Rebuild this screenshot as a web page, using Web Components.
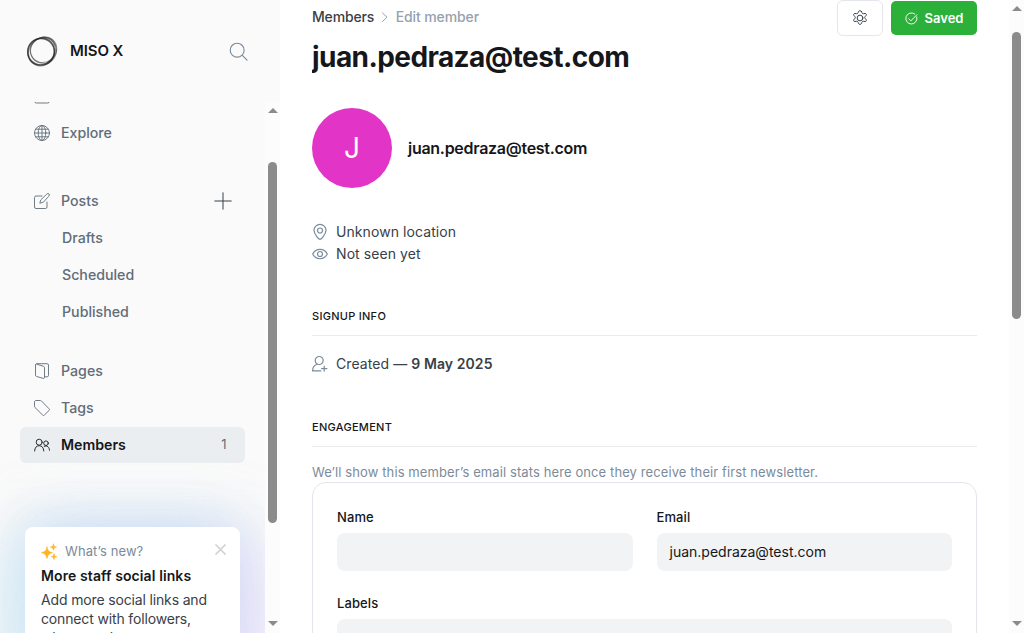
<!DOCTYPE html>
<html lang="en">
<head>
<meta charset="utf-8">
<title>Edit member</title>
<style>
html,body{margin:0;height:100%;overflow:hidden;background:#fff}
body{font-family:Inter,"Open Sans",sans-serif;font-size:14px;color:#15171a}
</style>
</head>
<body>
<admin-app></admin-app>
<script>
const define = (name, html, setup) => {
  const template = document.createElement('template');
  template.innerHTML = html;
  customElements.define(name, class extends HTMLElement {
    constructor() {
      super();
      this.attachShadow({ mode: 'open' }).append(template.content.cloneNode(true));
    }
    connectedCallback() { if (setup) setup(this, this.shadowRoot); }
  });
};

const icons = {
  ring: ['0 0 32 32', '<g fill="none" stroke="#222"><circle cx="15" cy="16.700" r="13.300" stroke-width="1.500" opacity=".7"/><ellipse cx="17.600" cy="14.800" rx="13.600" ry="12.200" stroke-width="1" opacity=".45" transform="rotate(-35 17.600 14.800)"/><ellipse cx="15.800" cy="16" rx="14.800" ry="12.300" stroke-width="1.200" opacity=".45" transform="rotate(-50 16 16)"/><ellipse cx="15.500" cy="16.800" rx="13.100" ry="14.200" stroke-width="1" opacity=".5" transform="rotate(25 15 16)"/><circle cx="17.400" cy="15.300" r="13" stroke-width="1.200" opacity=".35"/><path d="M17 2.300c6 0 10.500 2.500 12 8" stroke-width="2.800" opacity=".2"/><path d="M30 15c-.5 6-3 10-7 12.500" stroke-width="2.500" opacity=".2"/></g>'],
  search: ['0 0 20 20', '<circle cx="8.6" cy="8.6" r="7.3"/><path d="M14 14l5 5"/>'],
  site: ['0 0 16 16', '<rect x=".5" y="1" width="15" height="14" rx="2"/>'],
  globe: ['0 0 16 16', '<circle cx="8" cy="8" r="7.5"/><ellipse cx="8" cy="8" rx="3.8" ry="7.5"/><path d="M8 .5v15M.5 8h15M1.7 4.2h12.6M1.7 11.8h12.6"/>'],
  edit: ['0 0 16 16', '<path d="M8 3H2A1.5 1.5 0 0 0 .5 4.500v9.500A1.500 1.500 0 0 0 2 15.500h9.500A1.500 1.500 0 0 0 13 14V9"/><path d="M9 9.300l-3.200.9.900-3.200 6.200-6a1.400 1.400 0 0 1 2.100 2z"/>'],
  plus: ['0 0 18 18', '<path d="M9 .8v16.400M.8 9h16.400"/>'],
  pages: ['0 0 16 16', '<path d="M1.500 2v10.200c0 .6.3 1 .9 1.200l6.800 2c.7.200 1.300-.2 1.300-.9V4.700c0-.7-.3-1.200-1-1.400L2.700 1.100"/><path d="M1.500 2C1.500 1.200 2 .700 2.800.700h10.400c.8 0 1.300.5 1.300 1.300v10.500c0 .8-.5 1.300-1.300 1.300h-2.500"/>'],
  tag: ['0 0 16 16', '<path d="M.5 1.700C.5 1 1 .5 1.700.5h4.600c.4 0 .8.100 1.100.4l7.700 7.900c.5.500.5 1.100 0 1.600L10.300 15.100c-.5.500-1.100.5-1.600 0L.9 7.400A1.500 1.500 0 0 1 .5 6.300z"/>'],
  members: ['0 0 16 16', '<circle cx="5.200" cy="5.200" r="3"/><path d="M.6 14c.2-3.400 1.900-5.300 4.600-5.300S9.600 10.600 9.800 14"/><circle cx="12" cy="6.200" r="2.300"/><path d="M10.300 9.300c3-1.200 5 .8 5.200 4"/>'],
  spark: ['0 0 16 16', '<path fill="#ffb41f" stroke="#ffb41f" stroke-width=".7" d="M6 3.200c.8 3.500 1.800 4.700 5.500 5.500-3.700.8-4.700 2-5.500 5.700-.8-3.700-1.800-4.900-5.500-5.700C4.200 7.900 5.200 6.700 6 3.200zM12.400.2c.4 1.900.9 2.500 3 2.900-2.100.4-2.600 1-3 3-.4-2-.9-2.600-3-3 2.100-.4 2.600-1 3-2.900zM13 10c.4 1.900.8 2.400 2.700 2.800-1.900.4-2.300.9-2.700 2.800-.4-1.900-.8-2.400-2.700-2.800 1.900-.4 2.300-.9 2.700-2.800z"/>'],
  close: ['0 0 12 12', '<path d="M1 1l10 10M11 1L1 11"/>'],
  chevron: ['0 0 8 12', '<path d="M1.500 2l4.500 4.200L1.500 10.500"/>'],
  gear: ['0 0 24 24', '<circle cx="12" cy="12" r="4.300"/><path d="M14.200 2.200l.7 1.900a2.300 2.300 0 0 0 2.600 1.500l2-.4c1.700-.2 2.700 1.700 1.600 3l-1.300 1.500a2.300 2.300 0 0 0 0 3l1.300 1.600c1.100 1.300.1 3.200-1.600 3l-2-.4a2.300 2.300 0 0 0-2.600 1.500l-.7 1.900c-.6 1.600-3.800 1.600-4.400 0l-.7-1.900a2.300 2.300 0 0 0-2.600-1.500l-2 .4c-1.700.2-2.700-1.700-1.600-3l1.300-1.600a2.300 2.300 0 0 0 0-3L2.900 8.200c-1.100-1.300-.1-3.200 1.600-3l2 .4a2.300 2.300 0 0 0 2.600-1.500l.7-1.900c.6-1.600 3.800-1.600 4.400 0z"/>'],
  check: ['0 0 14 14', '<path d="M12.700 5.300A6 6 0 1 1 10.500 2.100"/><path d="M4 7.300l2.300 2.300L12.700 3"/>'],
  pin: ['0 0 16 16', '<path d="M8 15.300c-1 0-6-5.100-6-9a6 6 0 0 1 12 0c0 3.900-5 9-6 9z"/><circle cx="8" cy="6.500" r="2.500"/>'],
  eye: ['0 0 16 16', '<path d="M.7 8C3.800 1.700 12.200 1.700 15.300 8c-3.100 6.300-11.500 6.300-14.600 0z"/><circle cx="8" cy="8" r="2.500"/>'],
  signup: ['0 0 16 16', '<circle cx="7.200" cy="4.500" r="4"/><path d="M4.700 8.300C2 9.500.6 11.600.6 14.900h8.200M12.200 10v5.200M9.600 12.600h5.300"/>']
};
define('ui-icon', `<style>:host{display:block;flex:none;width:16px;height:16px;color:inherit}svg{display:block;width:100%;height:100%;fill:none;stroke:currentColor;stroke-linecap:round;stroke-linejoin:round;overflow:visible}</style><svg></svg>`, (el, root) => {
  const [box, body] = icons[el.getAttribute('name')];
  const svg = root.querySelector('svg');
  svg.setAttribute('viewBox', box);
  svg.innerHTML = body;
});

const makeIcon = name => {
  const icon = document.createElement('ui-icon');
  icon.setAttribute('name', name);
  return icon;
};

define('nav-item', `<style>
:host{display:flex;align-items:center;box-sizing:border-box;height:36px;margin-bottom:1px;padding:0 14px;border-radius:6px;color:#626d79;font-size:14.2px;font-weight:500;line-height:20px}
:host([sub]) .label{margin-left:28px}
:host([active]){background:#ebeef0;color:#15171a;font-weight:600}
ui-icon{stroke-width:.9}
.label{margin-left:11px;flex:1}
</style><span class="label"><slot></slot></span><slot name="end"></slot>`, (el, root) => {
  if (el.hasAttribute('icon')) root.querySelector('.label').before(makeIcon(el.getAttribute('icon')));
});

define('scroll-bar', `<style>
:host{display:flex;flex-direction:column;align-items:center;box-sizing:border-box;width:15px;height:100%;background:#fcfcfc;padding:6px 0 7px}
i{width:0;height:0;border:5px solid transparent}
.up{border-top:0;border-bottom:5px solid #8b8b8b}
.down{border-bottom:0;border-top:5px solid #8b8b8b;margin-top:auto}
b{width:9px;height:var(--thumb);margin-top:var(--offset);background:#8b8b8b;border-radius:4.500px}
</style><i class="up"></i><b></b><i class="down"></i>`);

define('whats-new', `<style>
:host{display:block;box-sizing:border-box;width:215px;height:150px;margin:64px 0 0 5px;padding:16px;background:#fff;border-radius:8px;
box-shadow:-28px 18px 56px rgba(205,238,246,.5),26px 20px 56px rgba(230,212,252,.55),0 -4px 56px rgba(160,200,238,.6)}
header{display:flex;align-items:center;height:16px;font-size:13px;line-height:17px;color:#7c8b9a;letter-spacing:.1px}
header ui-icon{margin-right:8.500px;margin-top:1px;margin-left:-.5px}
header .x{width:11px;height:11px;margin:-4px -1.500px 0 auto;color:#d3d3d3;stroke-width:1.700}
h3{margin:7px 0 4px;font-size:14px;line-height:20px;font-weight:600;letter-spacing:.1px}
p{margin:0;font-size:14px;line-height:19px;color:#394047;letter-spacing:-.15px}
</style><header><ui-icon name="spark"></ui-icon><span>What’s new?</span><ui-icon class="x" name="close"></ui-icon></header><h3>More staff social links</h3><p>Add more social links and connect with followers, wherever they</p>`);

define('app-sidebar', `<style>
:host{display:flex;flex-direction:column;width:280px;height:100%;background:#fafafa;flex:none}
.brand{display:flex;align-items:center;height:102px;padding:0 32px 0 26px;box-sizing:border-box;flex:none}
.brand .logo{width:32px;height:32px}
.brand b{margin:-2px 0 0 12px;flex:1;font-size:15px;font-weight:600;letter-spacing:-.1px}
.brand .search{width:19px;height:19px;margin-right:.5px;color:#7c8b9a;stroke-width:1.200}
.body{display:flex;flex:1;min-height:0}
nav{flex:1;overflow:hidden;padding:0 20px;box-sizing:border-box}
.list{margin-top:-24px}
.gap{margin-bottom:32px}.gap2{margin-bottom:23px}
.plus{width:18px;height:18px;margin-right:-1px;color:#394047;stroke-width:1}
.count{font-size:13px;font-weight:400;color:#626d79;margin:-3px 4.500px 0 0}
scroll-bar{--offset:49px;--thumb:361px}
</style>
<div class="brand"><ui-icon class="logo" name="ring"></ui-icon><b>MISO X</b><ui-icon class="search" name="search"></ui-icon></div>
<div class="body"><nav><div class="list">
<nav-item icon="site"></nav-item>
<nav-item icon="globe" class="gap">Explore</nav-item>
<nav-item icon="edit">Posts<ui-icon slot="end" class="plus" name="plus"></ui-icon></nav-item>
<nav-item sub>Drafts</nav-item><nav-item sub>Scheduled</nav-item><nav-item sub class="gap2">Published</nav-item>
<nav-item icon="pages">Pages</nav-item><nav-item icon="tag">Tags</nav-item>
<nav-item icon="members" active>Members<span slot="end" class="count">1</span></nav-item>
</div><whats-new></whats-new></nav><scroll-bar></scroll-bar></div>`);

define('action-bar', `<style>
:host{display:flex;gap:8px;height:36px}
button{font:600 13px/20px Inter,sans-serif;display:flex;align-items:center;justify-content:center;box-sizing:border-box;margin:0;padding:0}
.gear{width:46px;height:36px;border:1px solid #e3e6ea;border-radius:6px;background:#fff;color:#394047}
.gear ui-icon{stroke-width:1.500;width:16px;height:16px}
.saved{width:86px;height:34px;margin-top:1px;border:0;border-radius:5px;background:#2bb13a;color:#fff;gap:7px}
.saved ui-icon{width:13px;height:13px}
</style><button class="gear" aria-label="Settings"><ui-icon name="gear"></ui-icon></button><button class="saved"><ui-icon name="check"></ui-icon><span>Saved</span></button>`);

define('page-header', `<style>
:host{display:flex;justify-content:space-between;height:76px}
.crumbs{display:flex;align-items:center;height:20px;margin-top:6px;font-size:14px;font-weight:500;color:#394047;letter-spacing:-.16px}
.crumbs ui-icon{width:8px;height:12px;margin:2px 6.500px 0 7px;color:#95a1ad}
.crumbs em{font-style:normal;color:#95a1ad;letter-spacing:-.1px}
h1{margin:12px 0 0;font-size:28px;line-height:38px;font-weight:700;letter-spacing:-.57px;overflow:hidden;width:400px}
</style><div><div class="crumbs"><span>Members</span><ui-icon name="chevron"></ui-icon><em>Edit member</em></div><h1><slot></slot></h1></div><action-bar></action-bar>`);

define('member-card', `<style>
:host{display:flex;align-items:center;height:80px;margin-top:32px}
.avatar{display:flex;align-items:center;justify-content:center;width:80px;height:80px;border-radius:50%;background:#e235c8;color:#fff;font-size:28px;line-height:34px}
b{margin-left:16px;font-size:16px;font-weight:600;line-height:24px;letter-spacing:-.28px}
</style><div class="avatar">J</div><b><slot></slot></b>`);

define('meta-row', `<style>
:host{display:flex;align-items:center;height:22px;font-size:14px;line-height:22px;color:#394047;letter-spacing:.08px}
ui-icon{margin-right:8px;color:#7c8b9a;stroke-width:1.200}
</style><span><slot></slot></span>`, (el, root) => {
  root.querySelector('span').before(makeIcon(el.getAttribute('icon')));
});

define('section-title', `<style>
:host{display:block;height:27px;border-bottom:1px solid #e9ebee;font-size:11px;line-height:17px;font-weight:500;letter-spacing:.28px;text-transform:uppercase}
</style><slot></slot>`);

define('form-field', `<style>
:host{display:block}
label{display:block;height:16px;font-size:13px;line-height:17px;font-weight:500;margin-bottom:8px;letter-spacing:.1px}
.input{box-sizing:border-box;height:38px;padding:9px 12px;background:#f1f3f4;border-radius:8px;font-size:14px;line-height:20px}
.value{display:block;overflow:hidden;text-indent:1px}
</style><label></label><div class="input"><span class="value"><slot></slot></span></div>`, (el, root) => {
  root.querySelector('label').textContent = el.getAttribute('label');
});

define('member-form', `<style>
:host{display:grid;grid-template-columns:1fr 1fr;gap:24px;box-sizing:border-box;height:300px;align-content:start;padding:26px 24px;border:1px solid #e3e6ea;border-radius:14px}
.wide{grid-column:1/3}
</style><form-field label="Name"></form-field><form-field label="Email">juan.pedraza@test.com</form-field><form-field label="Labels" class="wide"></form-field>`);

define('admin-app', `<style>
:host{display:flex;height:100vh;overflow:hidden}
main{flex:1;overflow:hidden;padding:0 32px;box-sizing:border-box}
.meta{margin-top:33px}
.signup{margin-top:43px}.created{margin:17px 0 44px}
p{margin:15px 0 0;height:20px;font-size:13px;line-height:21px;color:#7c8b9a;letter-spacing:.1px}
scroll-bar{--offset:21px;--thumb:287px}
</style><app-sidebar></app-sidebar><main>
<page-header>juan.pedraza@test.com</page-header>
<member-card>juan.pedraza@test.com</member-card>
<div class="meta"><meta-row icon="pin">Unknown location</meta-row><meta-row icon="eye">Not seen yet</meta-row></div>
<section-title class="signup">Signup info</section-title>
<meta-row icon="signup" class="created">Created — <strong style="font-weight:600">9 May 2025</strong></meta-row>
<section-title>Engagement</section-title>
<p>We’ll show this member’s email stats here once they receive their first newsletter.</p>
<member-form></member-form>
</main><scroll-bar></scroll-bar>`);
</script>
</body>
</html>
